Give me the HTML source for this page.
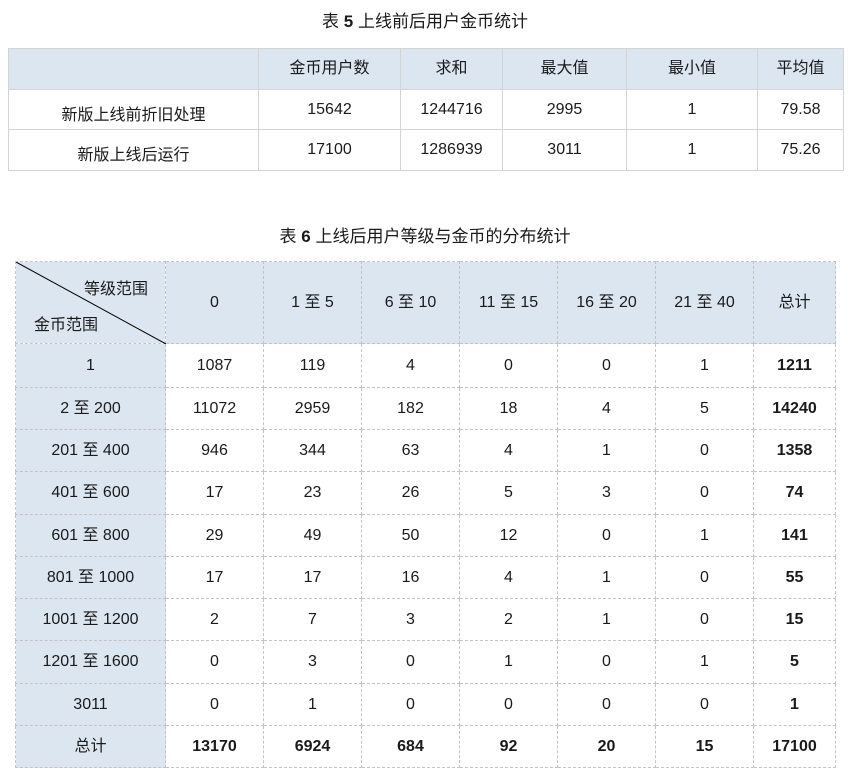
<!DOCTYPE html>
<html><head><meta charset="utf-8"><style>
body{margin:0;width:850px;height:778px;background:#fff;font-family:"Liberation Sans","Noto Sans CJK SC",sans-serif;color:#1a1a1a;position:relative;overflow:hidden}
.t{position:absolute;left:0;width:850px;text-align:center;font-size:17px;line-height:22px}
table{position:absolute;border-collapse:collapse;table-layout:fixed;font-size:16px}
td{text-align:center;padding:0;vertical-align:middle;line-height:20px}
td span,td b{line-height:20px}
#a{left:8px;top:48px;width:835px}
#a td{border:1px solid #d4d4d4}
#a tr.h td{background:#dce6f1}
#b{left:15px;top:261px;width:820px}
#b td{border:1px dashed #c4c4c4}
#b tr.h td,#b td.f{background:#dce6f1}
b{font-weight:bold}
</style></head><body>
<div class="t" style="top:11px">表 <b>5</b> 上线前后用户金币统计</div>
<table id="a">
<colgroup><col style="width:250px"><col style="width:142px"><col style="width:102px"><col style="width:124px"><col style="width:131px"><col style="width:86px"></colgroup>
<tr class="h" style="height:41px"><td></td><td>金币用户数</td><td>求和</td><td>最大值</td><td>最小值</td><td>平均值</td></tr>
<tr style="height:40px"><td style="padding-top:12px">新版上线前折旧处理</td><td>15642</td><td>1244716</td><td>2995</td><td>1</td><td>79.58</td></tr>
<tr style="height:41px"><td style="padding-top:12px">新版上线后运行</td><td>17100</td><td>1286939</td><td>3011</td><td>1</td><td>75.26</td></tr>
</table>
<div class="t" style="top:226px">表 <b>6</b> 上线后用户等级与金币的分布统计</div>
<table id="b">
<colgroup><col style="width:150px"><col style="width:98px"><col style="width:98px"><col style="width:98px"><col style="width:98px"><col style="width:98px"><col style="width:98px"><col style="width:82px"></colgroup>
<tr class="h" style="height:82px"><td style="position:relative">
<svg width="150" height="82" style="position:absolute;left:0;top:0"><line x1="0" y1="0" x2="150" y2="82" stroke="#000" stroke-width="1"/></svg>
<span style="position:absolute;left:68px;top:18px">等级范围</span>
<span style="position:absolute;left:18px;top:54px">金币范围</span></td>
<td>0</td><td>1 至 5</td><td>6 至 10</td><td>11 至 15</td><td>16 至 20</td><td>21 至 40</td><td>总计</td></tr>
<tr style="height:44px"><td class="f">1</td><td>1087</td><td>119</td><td>4</td><td>0</td><td>0</td><td>1</td><td><b>1211</b></td></tr>
<tr style="height:42px"><td class="f">2 至 200</td><td>11072</td><td>2959</td><td>182</td><td>18</td><td>4</td><td>5</td><td><b>14240</b></td></tr>
<tr style="height:42px"><td class="f">201 至 400</td><td>946</td><td>344</td><td>63</td><td>4</td><td>1</td><td>0</td><td><b>1358</b></td></tr>
<tr style="height:43px"><td class="f">401 至 600</td><td>17</td><td>23</td><td>26</td><td>5</td><td>3</td><td>0</td><td><b>74</b></td></tr>
<tr style="height:42px"><td class="f">601 至 800</td><td>29</td><td>49</td><td>50</td><td>12</td><td>0</td><td>1</td><td><b>141</b></td></tr>
<tr style="height:42px"><td class="f">801 至 1000</td><td>17</td><td>17</td><td>16</td><td>4</td><td>1</td><td>0</td><td><b>55</b></td></tr>
<tr style="height:42px"><td class="f">1001 至 1200</td><td>2</td><td>7</td><td>3</td><td>2</td><td>1</td><td>0</td><td><b>15</b></td></tr>
<tr style="height:43px"><td class="f">1201 至 1600</td><td>0</td><td>3</td><td>0</td><td>1</td><td>0</td><td>1</td><td><b>5</b></td></tr>
<tr style="height:42px"><td class="f">3011</td><td>0</td><td>1</td><td>0</td><td>0</td><td>0</td><td>0</td><td><b>1</b></td></tr>
<tr style="height:42px"><td class="f">总计</td><td><b>13170</b></td><td><b>6924</b></td><td><b>684</b></td><td><b>92</b></td><td><b>20</b></td><td><b>15</b></td><td><b>17100</b></td></tr>
</table>
</body></html>
